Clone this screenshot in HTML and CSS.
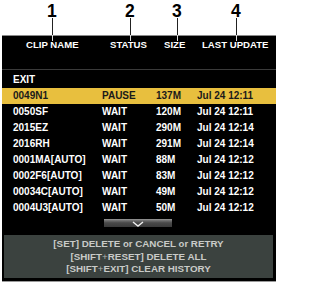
FILE: index.html
```html
<!DOCTYPE html>
<html>
<head>
<meta charset="utf-8">
<link rel="stylesheet" href="styles.css">
</head>
<body>
<div class="figure">
  <div class="callouts">
    <span class="num n1">1</span><span class="lead l1"></span>
    <span class="num n2">2</span><span class="lead l2"></span>
    <span class="num n3">3</span><span class="lead l3"></span>
    <span class="num n4">4</span><span class="lead l4"></span>
  </div>
  <div class="panel">
    <div class="head">
      <span class="h1">CLIP NAME</span>
      <span class="h2">STATUS</span>
      <span class="h3">SIZE</span>
      <span class="h4">LAST UPDATE</span>
    </div>
    <div class="sep"></div>
    <div class="list">
      <div class="row"><span>EXIT</span><span></span><span></span><span></span></div>
      <div class="row sel"><span>0049N1</span><span>PAUSE</span><span>137M</span><span>Jul 24 12:11</span></div>
      <div class="row"><span>0050SF</span><span>WAIT</span><span>120M</span><span>Jul 24 12:11</span></div>
      <div class="row"><span>2015EZ</span><span>WAIT</span><span>290M</span><span>Jul 24 12:14</span></div>
      <div class="row"><span>2016RH</span><span>WAIT</span><span>291M</span><span>Jul 24 12:14</span></div>
      <div class="row"><span>0001MA[AUTO]</span><span>WAIT</span><span>88M</span><span>Jul 24 12:12</span></div>
      <div class="row"><span>0002F6[AUTO]</span><span>WAIT</span><span>83M</span><span>Jul 24 12:12</span></div>
      <div class="row"><span>00034C[AUTO]</span><span>WAIT</span><span>49M</span><span>Jul 24 12:12</span></div>
      <div class="row"><span>0004U3[AUTO]</span><span>WAIT</span><span>50M</span><span>Jul 24 12:12</span></div>
    </div>
    <div class="scroll">
      <svg width="12" height="6" viewBox="0 0 12 6"><polyline points="1,1 6,5 11,1" fill="none" stroke="#f0f0f0" stroke-width="1.4"/></svg>
    </div>
    <div class="help">
      <div>[SET] DELETE <span class="lc">or</span> CANCEL <span class="lc">or</span> RETRY</div>
      <div>[SHIFT<span class="plus">+</span>RESET] DELETE ALL</div>
      <div>[SHIFT<span class="plus">+</span>EXIT] CLEAR HISTORY</div>
    </div>
  </div>
</div>
</body>
</html>
```

FILE: styles.css
```css
html, body {
  margin: 0;
  padding: 0;
  background: #fff;
}
body {
  font-family: "Liberation Sans", Arial, Helvetica, sans-serif;
  font-weight: bold;
}
.figure {
  position: relative;
  width: 278px;
  height: 284px;
}
.callouts {
  height: 35px;
}
.num {
  position: absolute;
  top: 2px;
  font-size: 17.5px;
  line-height: 18px;
  color: #000;
  z-index: 2;
}
.n1 { left: 47px; }
.n2 { left: 125px; }
.n3 { left: 172px; }
.n4 { left: 231px; }
.lead {
  position: absolute;
  top: 18px;
  width: 1px;
  height: 23px;
  background: linear-gradient(#222 0, #222 17px, #ddd 17px, #ddd 23px);
  z-index: 2;
}
.l1 { left: 52px; }
.l2 { left: 130px; }
.l3 { left: 177px; }
.l4 { left: 236px; }
.panel {
  margin: 0 2px;
  background: #000;
  border-top: 1px solid #8a8a8a;
  border-bottom: 1px solid #9a9a9a;
  height: 247px;
  box-sizing: border-box;
  display: flex;
  flex-direction: column;
}
.head {
  height: 33px;
  box-sizing: border-box;
  padding-top: 4px;
  padding-left: 11px;
  font-size: 9.6px;
  line-height: 10px;
  color: #fff;
  display: grid;
  grid-template-columns: 89px 54px 41px 1fr;
}
.head .h1 { padding-left: 13px; }
.head .h2 { padding-left: 8px; }
.head .h3 { padding-left: 8px; }
.head .h4 { padding-left: 5px; }
.sep {
  height: 1px;
  background: #3a3a3a;
  margin-bottom: 2px;
}
.row {
  height: 16px;
  line-height: 16px;
  font-size: 10px;
  color: #fff;
  display: grid;
  grid-template-columns: 89px 54px 41px 1fr;
  padding-left: 11px;
  white-space: nowrap;
}
.row.sel {
  background: #e8bf3e;
  color: #1a1a1a;
}
.scroll {
  margin: 3px 0 0 102px;
  width: 68px;
  height: 8px;
  box-sizing: border-box;
  background: linear-gradient(#7a7a7a, #4a4a4a 40%, #3a3a3a);
  border-top: 1px solid #8c8c8c;
  display: flex;
  justify-content: center;
  align-items: center;
}
.scroll svg { display: block; }
.help {
  margin: 8px 3px 0 2px;
  height: 43px;
  box-sizing: border-box;
  background: #3b423f;
  color: #c9cbc8;
  font-size: 9.8px;
  line-height: 12.5px;
  padding-top: 3px;
  text-align: center;
}
.help .lc { font-size: 9.5px; }
.help .plus { color: #aeb0ad; font-weight: normal; }
```
